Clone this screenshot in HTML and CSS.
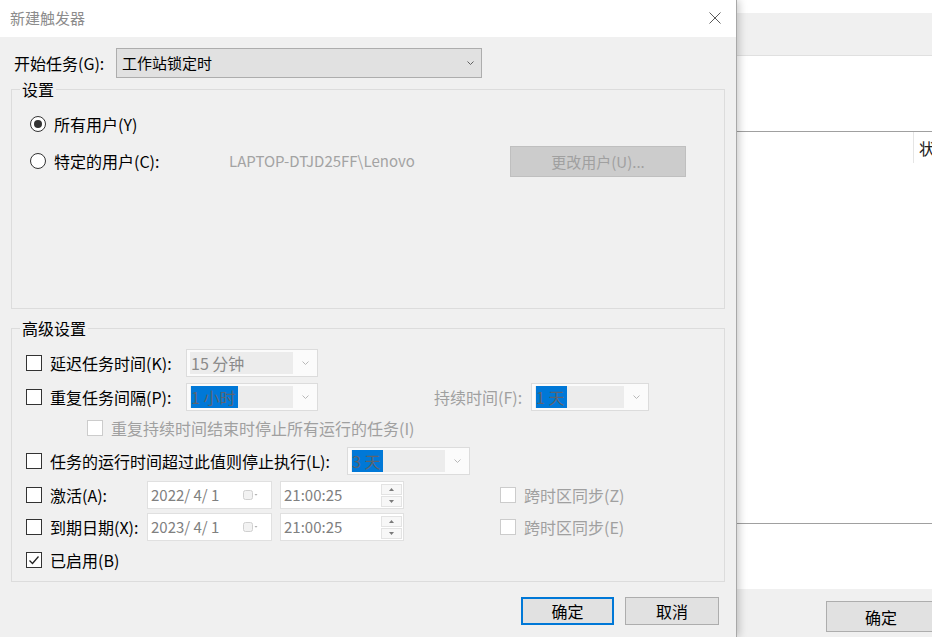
FILE: index.html
```html
<!DOCTYPE html>
<html>
<head>
	<meta charset="UTF-8">
	<title>新建触发器</title>
	<link rel="stylesheet" href="styles.css">
</head>
<body>
	<div class="screen">
		<div class="dialog">
			<div class="titlebar">
				<span class="title">新建触发器</span>
				<svg class="close" viewBox="0 0 12 12"><path d="M0.5 0.5L11.5 11.5M11.5 0.5L0.5 11.5" /></svg>
			</div>
			<div class="body">
				<div class="start-row">
					<span class="start-lbl">开始任务(G):</span>
					<div class="combo">
						<span>工作站锁定时</span>
						<svg class="chev" viewBox="0 0 7 4"><path d="M0.5 0.5L3.5 3.5L6.5 0.5" /></svg>
					</div>
				</div>

				<fieldset class="group group-settings">
					<legend>设置</legend>
					<div class="settings-body">
						<div class="radio-row">
							<span class="radio on"></span>
							<span class="radio-lbl">所有用户(Y)</span>
						</div>
						<div class="radio-row row-user">
							<span class="radio"></span>
							<span class="radio-lbl user-lbl">特定的用户(C):</span>
							<span class="user-name">LAPTOP-DTJD25FF\Lenovo</span>
							<button class="btn-dis">更改用户(U)...</button>
						</div>
					</div>
				</fieldset>

				<fieldset class="group group-adv">
					<legend>高级设置</legend>
					<div class="adv-body">
						<div class="row">
							<span class="cb"></span>
							<span class="lbl w136">延迟任务时间(K):</span>
							<div class="dcombo w132">
								<span class="val">15 分钟</span>
								<span class="arr"><svg class="chev" viewBox="0 0 7 4"><path d="M0.5 0.5L3.5 3.5L6.5 0.5" /></svg></span>
							</div>
						</div>
						<div class="row">
							<span class="cb"></span>
							<span class="lbl w136">重复任务间隔(P):</span>
							<div class="dcombo w132">
								<span class="val"><span class="sel">1 小时</span></span>
								<span class="arr"><svg class="chev" viewBox="0 0 7 4"><path d="M0.5 0.5L3.5 3.5L6.5 0.5" /></svg></span>
							</div>
							<span class="lbl dis dur-lbl">持续时间(F):</span>
							<div class="dcombo w118">
								<span class="val"><span class="sel">1 天</span></span>
								<span class="arr"><svg class="chev" viewBox="0 0 7 4"><path d="M0.5 0.5L3.5 3.5L6.5 0.5" /></svg></span>
							</div>
						</div>
						<div class="row">
							<span class="cb dis sub-cb"></span>
							<span class="lbl dis">重复持续时间结束时停止所有运行的任务(I)</span>
						</div>
						<div class="row">
							<span class="cb"></span>
							<span class="lbl w297">任务的运行时间超过此值则停止执行(L):</span>
							<div class="dcombo w123">
								<span class="val"><span class="sel">3 天</span></span>
								<span class="arr"><svg class="chev" viewBox="0 0 7 4"><path d="M0.5 0.5L3.5 3.5L6.5 0.5" /></svg></span>
							</div>
						</div>
						<div class="row">
							<span class="cb"></span>
							<span class="lbl w97">激活(A):</span>
							<div class="datebox">
								<span>2022/ 4/ 1</span>
								<svg class="cal" viewBox="0 0 15 11"><rect x="0.5" y="0.5" width="9" height="9" rx="2" /><path d="M11.5 4h3l-1.5 1.8z" /></svg>
							</div>
							<div class="timebox">
								<span>21:00:25</span>
								<span class="spin">
									<span class="spin-btn"><svg viewBox="0 0 5 3"><path d="M0 3L2.5 0L5 3z" /></svg></span>
									<span class="spin-btn"><svg viewBox="0 0 5 3"><path d="M0 0L2.5 3L5 0z" /></svg></span>
								</span>
							</div>
							<span class="cb dis tz-cb"></span>
							<span class="lbl dis">跨时区同步(Z)</span>
						</div>
						<div class="row">
							<span class="cb"></span>
							<span class="lbl w97">到期日期(X):</span>
							<div class="datebox">
								<span>2023/ 4/ 1</span>
								<svg class="cal" viewBox="0 0 15 11"><rect x="0.5" y="0.5" width="9" height="9" rx="2" /><path d="M11.5 4h3l-1.5 1.8z" /></svg>
							</div>
							<div class="timebox">
								<span>21:00:25</span>
								<span class="spin">
									<span class="spin-btn"><svg viewBox="0 0 5 3"><path d="M0 3L2.5 0L5 3z" /></svg></span>
									<span class="spin-btn"><svg viewBox="0 0 5 3"><path d="M0 0L2.5 3L5 0z" /></svg></span>
								</span>
							</div>
							<span class="cb dis tz-cb"></span>
							<span class="lbl dis">跨时区同步(E)</span>
						</div>
						<div class="row">
							<span class="cb on"><svg viewBox="0 0 14 14"><path d="M2.5 7.5L5.5 10.5L11.5 3.5" /></svg></span>
							<span class="lbl">已启用(B)</span>
						</div>
					</div>
				</fieldset>

				<div class="buttons">
					<button class="btn btn-default">确定</button>
					<button class="btn">取消</button>
				</div>
			</div>
		</div>

		<div class="backwin">
			<div class="bw-top"></div>
			<div class="bw-band"></div>
			<div class="bw-pane"></div>
			<div class="bw-header"><span class="bw-sep"></span><span class="bw-col">状态</span></div>
			<div class="bw-list"></div>
			<div class="bw-pane2"></div>
			<div class="bw-foot"><button class="btn bw-btn">确定</button></div>
		</div>
	</div>
</body>
</html>
```

FILE: styles.css
```css
* {
	margin: 0;
	padding: 0;
	box-sizing: border-box;
}

body {
	font-family: "Noto Sans CJK SC", "Microsoft YaHei", sans-serif;
	font-size: 16px;
	line-height: 20px;
	color: #000;
	background: #fff;
	overflow: hidden;
}

.screen {
	display: flex;
	width: 932px;
	height: 637px;
}

/* dialog */
.dialog {
	width: 737px;
	flex: none;
	display: flex;
	flex-direction: column;
	background: #f0f0f0;
	border-right: 1px solid #a8a8a8;
	box-shadow: 2px 0 8px rgba(0, 0, 0, 0.22);
	position: relative;
	z-index: 1;
}

.titlebar {
	height: 37px;
	background: #fff;
	display: flex;
	align-items: center;
	justify-content: space-between;
	padding: 0 15px 2px 10px;
}

.title {
	font-size: 15px;
	color: #8c8c8c;
}

.close {
	width: 12px;
	height: 12px;
	fill: none;
	stroke: #5a5a5a;
	stroke-width: 1;
}

.body {
	flex: 1;
	padding: 11px 11px 0 11px;
}

.start-row {
	display: flex;
	align-items: center;
	height: 30px;
}

.start-lbl {
	width: 105px;
	padding-left: 3px;
}

.combo {
	width: 366px;
	height: 30px;
	background: #e1e1e1;
	border: 1px solid #adadad;
	display: flex;
	align-items: center;
	justify-content: space-between;
	padding: 0 7px 0 5px;
	font-size: 15px;
}

.chev {
	width: 7px;
	height: 4px;
	fill: none;
	stroke: #606060;
	stroke-width: 1;
}

/* group boxes */
.group {
	border: 1px solid #dcdcdc;
	min-width: 0;
}

.group legend {
	margin-left: 8px;
	padding: 0 2px;
	line-height: 20px;
}

.group-settings {
	margin-top: 1px;
}

.settings-body {
	height: 209px;
	padding: 10px 0 0 18px;
}

.radio-row {
	display: flex;
	align-items: center;
	height: 30px;
}

.row-user {
	height: 32px;
	margin-top: 6px;
}

.radio {
	width: 16px;
	height: 16px;
	border: 1px solid #333;
	border-radius: 50%;
	background: #fff;
	display: flex;
	align-items: center;
	justify-content: center;
	flex: none;
}

.radio.on::after {
	content: "";
	width: 8px;
	height: 8px;
	border-radius: 50%;
	background: #333;
}

.radio-lbl {
	margin-left: 8px;
}

.user-lbl {
	width: 175px;
}

.user-name {
	width: 281px;
	color: #a3a3a3;
	font-size: 15px;
}

.btn-dis {
	width: 176px;
	height: 31px;
	background: #cccccc;
	border: 1px solid #bfbfbf;
	color: #a0a0a0;
	font-family: inherit;
	font-size: 15px;
}

.group-adv {
	margin-top: 9px;
}

.adv-body {
	display: grid;
	grid-template-rows: 32px 36px 26px 40px 28px 36px 30px;
	padding: 9px 0 6px 14px;
}

.row {
	display: flex;
	align-items: center;
}

/* checkbox */
.cb {
	width: 16px;
	height: 16px;
	border: 1px solid #333;
	background: #fff;
	flex: none;
	display: flex;
	align-items: center;
	justify-content: center;
}

.cb.dis {
	border-color: #cccccc;
}

.cb svg {
	width: 14px;
	height: 14px;
	fill: none;
	stroke: #222;
	stroke-width: 1.3;
}

.sub-cb {
	margin-left: 61px;
}

.tz-cb {
	margin-left: 96px;
}

.lbl {
	margin-left: 8px;
	flex: none;
}

.lbl.dis {
	color: #a0a0a0;
}

.w136 { width: 136px; }
.w297 { width: 297px; }
.w97 { width: 97px; }

.dur-lbl {
	margin-left: 116px;
	width: 97px;
}

/* disabled combo */
.dcombo {
	height: 28px;
	display: flex;
	border: 1px solid #dcdcdc;
	background: #fbfbfb;
	padding: 2px 0 2px 3px;
	flex: none;
}

.w132 { width: 132px; }
.w118 { width: 118px; }
.w123 { width: 123px; }

.dcombo .val {
	flex: 1;
	background: #ececec;
	color: #8a8a8a;
	line-height: 22px;
	padding-left: 1px;
	white-space: pre;
}

.dcombo .sel {
	display: inline-block;
	background: #0078d7;
	color: #5b6470;
	padding: 0 3px 0 0;
	height: 22px;
}

.dcombo .arr {
	width: 24px;
	display: flex;
	align-items: center;
	justify-content: center;
}

.dcombo .chev {
	stroke: #b8b8b8;
}

/* date and time pickers */
.datebox,
.timebox {
	height: 28px;
	border: 1px solid #e0e0e0;
	background: #fff;
	display: flex;
	align-items: center;
	justify-content: space-between;
	color: #808080;
	font-size: 15px;
	flex: none;
}

.datebox {
	width: 125px;
	padding: 0 13px 0 3px;
	white-space: pre;
}

.cal {
	width: 15px;
	height: 11px;
}

.cal rect {
	fill: #f2f2f2;
	stroke: #d0d0d0;
}

.cal path {
	fill: #b0b0b0;
}

.timebox {
	width: 124px;
	margin-left: 8px;
	padding: 0 1px 0 3px;
}

.spin {
	display: flex;
	flex-direction: column;
	gap: 1px;
	width: 21px;
}

.spin-btn {
	height: 11px;
	border: 1px solid #e3e3e3;
	background: #f7f7f7;
	display: flex;
	align-items: center;
	justify-content: center;
}

.spin-btn svg {
	width: 5px;
	height: 3px;
	fill: #7a7a7a;
}

/* buttons */
.buttons {
	display: flex;
	justify-content: flex-end;
	gap: 11px;
	margin-top: 15px;
	padding-right: 6px;
}

.btn {
	width: 94px;
	height: 28px;
	background: #e1e1e1;
	border: 1px solid #adadad;
	font-family: inherit;
	font-size: 16px;
	color: #000;
}

.btn-default {
	width: 93px;
	border: 2px solid #0078d7;
}

/* window behind */
.backwin {
	flex: 1;
	display: flex;
	flex-direction: column;
	overflow: hidden;
	background: #fff;
}

.bw-top {
	height: 13px;
}

.bw-band {
	height: 43px;
	background: #f0f0f0;
	border-bottom: 1px solid #e0e0e0;
}

.bw-pane {
	height: 76px;
	border-bottom: 1px solid #a0a0a0;
}

.bw-header {
	height: 31px;
	display: flex;
	align-items: center;
	padding-left: 176px;
	white-space: nowrap;
}

.bw-sep {
	width: 1px;
	height: 31px;
	background: #e5e5e5;
	flex: none;
}

.bw-col {
	margin-left: 5px;
	color: #222;
}

.bw-list {
	height: 361px;
	border-bottom: 1px solid #a0a0a0;
}

.bw-pane2 {
	height: 65px;
}

.bw-foot {
	flex: 1;
	background: #f0f0f0;
	padding: 12px 0 0 89px;
}

.bw-btn {
	width: 110px;
	height: 31px;
	flex: none;
}
```
